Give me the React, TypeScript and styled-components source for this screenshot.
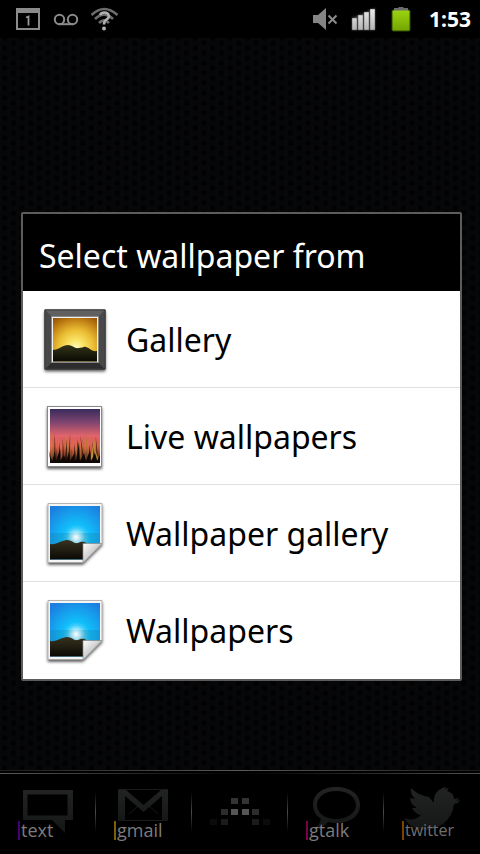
import React from "react";
import styled, { createGlobalStyle } from "styled-components";

const GlobalStyle = createGlobalStyle`
  * { box-sizing: border-box; }
  body { margin: 0; background: #000; font-family: "Noto Sans", "Open Sans", sans-serif; }
  button { font: inherit; border: 0; margin: 0; cursor: pointer; }
`;

const dotTile = encodeURIComponent(
  `<svg xmlns="http://www.w3.org/2000/svg" width="52" height="30"><rect width="52" height="30" fill="#060708"/><g fill="#020203" stroke="#08090a" stroke-width=".6">${[0, 1, 2, 3, 4, 5, 6]
    .map((c) =>
      [-1, 0, 1, 2, 3]
        .map((r) => `<circle cx="${c * 8.667 - 4}" cy="${r * 10 + (c % 2 ? 8 : 3)}" r="3.4"/>`)
        .join("")
    )
    .join("")}</g></svg>`
);

const Screen = styled.div`
  min-height: 100vh;
  display: flex;
  flex-direction: column;
  background: #040506 url("data:image/svg+xml,${dotTile}");
`;

const StatusBar = styled.header`
  display: flex;
  align-items: center;
  justify-content: space-between;
  height: 38px;
  padding: 0 9px 0 15px;
  background: #000;
`;

const StatusGroup = styled.div`
  display: flex;
  align-items: center;
  gap: 12px;
`;

const Clock = styled.time`
  color: #fff;
  font-size: 21px;
  font-weight: 700;
  line-height: 38px;
  margin-left: 4px;
`;

const Desktop = styled.main`
  flex: 1;
`;

const Overlay = styled.div`
  position: fixed;
  inset: 38px 0 0;
  display: flex;
  align-items: center;
  padding: 0 18px 0 21px;
  pointer-events: none;
`;

const Dialog = styled.section`
  flex: 1;
  border: 2px solid #5c5c5c;
  border-radius: 2px;
  background: #000;
  pointer-events: auto;
`;

const DialogTitle = styled.h1`
  margin: 0;
  padding: 20px 16px 13px;
  color: #fff;
  font-size: 32px;
  font-weight: 400;
  line-height: 44px;
  white-space: nowrap;
`;

const OptionList = styled.ul`
  margin: 0;
  padding: 0;
  list-style: none;
  background: #fff;
`;

const OptionItem = styled.li`
  border-bottom: 1px solid #e1e1e1;
  &:last-child { border-bottom-color: #fff; }
`;

const OptionButton = styled.button`
  display: flex;
  align-items: center;
  gap: 15px;
  width: 100%;
  height: 96px;
  padding: 0 16px;
  background: transparent;
  color: #000;
  font-size: 32px;
  line-height: 44px;
  text-align: left;
  white-space: nowrap;
`;

const OptionLabel = styled.span`
  padding-top: 2px;
`;

const Dock = styled.nav`
  display: grid;
  grid-template-columns: repeat(5, 1fr);
  height: 84px;
  padding-top: 4px;
  background:
    linear-gradient(90deg, #1c1c1c, #5a5a5a 50%, #1c1c1c) 0 0 / 100% 1px no-repeat,
    linear-gradient(90deg, #5a5a5a, #000 50%, #505050) 0 3px / 100% 1px no-repeat,
    #000;
`;

const DockButton = styled.button`
  display: grid;
  justify-items: start;
  padding: 0;
  background: linear-gradient(#000, #4a4a4a 50%, #000) 100% 18px / 1px 40px no-repeat;
  &:last-child { background: none; }
  & > * { grid-area: 1 / 1; }
`;

const DockLabel = styled.span<{ $accent: string; $bold?: boolean }>`
  align-self: end;
  margin: 0 0 14px 18px;
  padding-left: 1px;
  border-left: 2px solid ${(p) => p.$accent};
  color: ${(p) => (p.$bold ? "#7c7c7c" : "#707070")};
  font-family: "Open Sans", "Noto Sans", sans-serif;
  font-size: ${(p) => (p.$bold ? 18 : 16)}px;
  font-weight: ${(p) => (p.$bold ? 500 : 400)};
  line-height: 19px;
`;

const Icon = styled.svg`
  display: block;
  flex: none;
`;

const CalendarIcon = () => (
  <Icon width="26" height="24" viewBox="0 0 26 24" role="img" aria-label="Calendar event">
    <path d="M1 1h24v22H1zM3 6v15h20V6z" fill="#8b8b8b" fillRule="evenodd" />
    <path d="M11 10.500l2.500-1V18.500" fill="none" stroke="#999" strokeWidth="1.8" />
  </Icon>
);

const VoicemailIcon = () => (
  <Icon width="26" height="24" viewBox="0 0 26 24" role="img" aria-label="Voicemail">
    <g fill="none" stroke="#8b8b8b" strokeWidth="2">
      <circle cx="6.500" cy="12.500" r="4.700" />
      <circle cx="19.500" cy="12.500" r="4.700" />
      <path d="M6 17.200h14" />
    </g>
  </Icon>
);

const WifiIcon = () => (
  <Icon width="30" height="26" viewBox="0 0 30 26" role="img" aria-label="Wi-Fi unknown">
    <g fill="none" stroke="#6c6c6c" strokeWidth="2.600">
      <path d="M.500 9Q13-3 26.500 9" />
      <path d="M4 13Q13 4 22 13" />
      <path d="M8 17Q13 12 18 17" />
    </g>
    <path d="M9 9Q10 6.500 13.500 6.500T18 10Q18 12 15.500 13.500T13 18.500" fill="none" stroke="#b0b0b0" strokeWidth="2.600" />
    <circle cx="13" cy="22.500" r="2" fill="#b0b0b0" />
  </Icon>
);

const MuteIcon = () => (
  <Icon width="26" height="24" viewBox="0 0 26 24" role="img" aria-label="Muted">
    <path d="M0 8h5L13 1v22L5 16H0z" fill="#858585" />
    <path d="M15.500 8.500l8 8m0-8l-8 8" stroke="#8b8b8b" strokeWidth="2" />
  </Icon>
);

const SignalIcon = () => (
  <Icon width="26" height="26" viewBox="0 0 26 26" role="img" aria-label="Signal strength">
    <defs>
      <linearGradient id="bar" x2="0" y2="1">
        <stop stopColor="#ececec" />
        <stop offset="1" stopColor="#b4b4b4" />
      </linearGradient>
      <filter id="glow" x="-20%" y="-20%" width="140%" height="140%">
        <feGaussianBlur stdDeviation="1.300" />
      </filter>
    </defs>
    <path d="M1 12L24 2v22H1z" fill="#444" filter="url(#glow)" />
    <path d="M1 12h5v12H1zM7 9h5v15H7zM13 6h5v18h-5zM19 3h5v21h-5z" fill="url(#bar)" stroke="#444" strokeWidth=".4" />
  </Icon>
);

const BatteryIcon = () => (
  <Icon width="24" height="30" viewBox="0 0 24 30" role="img" aria-label="Battery full">
    <defs>
      <linearGradient id="charge" x2="0" y2="1">
        <stop stopColor="#9bd411" />
        <stop offset="1" stopColor="#74a600" />
      </linearGradient>
    </defs>
    <rect x="2.500" y="5.500" width="19" height="22" rx="2" fill="#2f4a00" />
    <path d="M5 7V4h4l1-1h4l1 1h4v3z" fill="#6b6b6b" />
    <rect x="3.500" y="6.500" width="17" height="20" rx="1" fill="url(#charge)" />
  </Icon>
);

const Shadow = ({ id }: { id: string }) => (
  <filter id={id} x="-20%" y="-20%" width="140%" height="150%">
    <feDropShadow dx="0" dy="2" stdDeviation="1.600" floodOpacity=".65" />
  </filter>
);

const FrameIcon = () => (
  <Icon width="72" height="72" viewBox="0 0 72 72" aria-hidden="true">
    <defs>
      <Shadow id="frameShadow" />
      <radialGradient id="sunset" cx=".52" cy=".68" r=".85">
        <stop stopColor="#fffbc0" />
        <stop offset=".2" stopColor="#fbe568" />
        <stop offset=".48" stopColor="#eabd33" />
        <stop offset=".78" stopColor="#bc7a12" />
        <stop offset="1" stopColor="#8b4c07" />
      </radialGradient>
      <linearGradient id="soil" x2="0" y2="1">
        <stop stopColor="#34331a" />
        <stop offset="1" stopColor="#090a03" />
      </linearGradient>
    </defs>
    <rect x="5.500" y="6.500" width="61" height="60" rx="1" fill="#4b4b4b" filter="url(#frameShadow)" />
    <path d="M5.500 6.500h61L60 13H12z" fill="#606060" />
    <path d="M5.500 66.500h61L60 60H12z" fill="#2d2d2d" />
    <path d="M5.500 66.500v-60L12 13v47zM66.500 66.500v-60L60 13v47z" fill="#484848" />
    <path d="M6 66V7h60v59z" fill="none" stroke="#3c3c3c" />
    <rect x="12.500" y="13.500" width="47" height="46" fill="#f2f2f2" stroke="#888" />
    <rect x="14" y="15" width="44" height="43.500" fill="url(#sunset)" />
    <path d="M14 47c5 0 10-5 15-5 4 0 7 4 11 3 3 0 5-2 7-1 4 1 6 5 11 4v10.500H14z" fill="url(#soil)" />
  </Icon>
);

const bladeColors = ["#8c3d34", "#d58a3e", "#2a120c", "#c0603c", "#5b2418", "#a8842a", "#d8803c"];

const blades = Array.from({ length: 44 }, (_, i) => {
  const x = 11.500 + ((i * 17) % 44) * 1.1;
  const height = 12 + ((i * 23) % 20);
  const lean = ((i * 7) % 5) - 2;
  return { d: `M${x} 62L${x + lean} ${62 - height}L${x + 2} 62z`, fill: bladeColors[i % 7] };
});

const GrassIcon = () => (
  <Icon width="72" height="72" viewBox="0 0 72 72" aria-hidden="true">
    <defs>
      <Shadow id="grassShadow" />
      <linearGradient id="dusk" x2="0" y2="1">
        <stop stopColor="#392b5c" />
        <stop offset=".25" stopColor="#80466f" />
        <stop offset=".5" stopColor="#e3646c" />
        <stop offset=".75" stopColor="#e8704f" />
        <stop offset="1" stopColor="#a05020" />
      </linearGradient>
      <linearGradient id="field" x2="0" y2="1">
        <stop stopColor="#3a1210" stopOpacity="0" />
        <stop offset="1" stopColor="#0a0502" stopOpacity=".7" />
      </linearGradient>
    </defs>
    <rect x="8.500" y="6.500" width="54" height="60" fill="#fff" stroke="#888" filter="url(#grassShadow)" />
    <rect x="11" y="9" width="50" height="54" fill="url(#dusk)" />
    <path d="M11 37h50v26H11z" fill="#c04444" opacity=".15" />
    {blades.map((b) => (
      <path key={b.d} d={b.d} fill={b.fill} />
    ))}
    <path d="M11 46h50v17H11z" fill="url(#field)" />
    <path d="M38 60l2-20 1 20zM51 60l4-19-1 19zM58 60l-4-15 6 15z" fill="#c0a43a" opacity=".8" />
    <path d="M11 63v-7l2 5 3-9 1 9 4-12v12l4-6 2 6 3-9 1 9 4-7 2 7 3-19 1 19 4-8 2 8 4-11 1 11 4-8 2 8 3-6v8z" fill="#100805" />
  </Icon>
);

const PictureIcon = ({ id }: { id: string }) => (
  <Icon width="72" height="72" viewBox="0 0 72 72" aria-hidden="true">
    <defs>
      <Shadow id={`${id}Shadow`} />
      <radialGradient id={`${id}Sky`} cx=".53" cy=".62" r=".72">
        <stop stopColor="#e4faff" />
        <stop offset=".14" stopColor="#7fe0fa" />
        <stop offset=".38" stopColor="#10bffa" />
        <stop offset="1" stopColor="#1c7fe0" />
      </radialGradient>
      <radialGradient id={`${id}Sun`}>
        <stop stopColor="#fff" stopOpacity=".95" />
        <stop offset="1" stopColor="#bff2ff" stopOpacity="0" />
      </radialGradient>
      <linearGradient id={`${id}Land`} x2="0" y2="1">
        <stop stopColor="#383320" />
        <stop offset="1" stopColor="#0a0904" />
      </linearGradient>
      <linearGradient id={`${id}Curl`} x2="1" y2="1">
        <stop stopColor="#fff" />
        <stop offset=".55" stopColor="#c6c6c6" />
      </linearGradient>
    </defs>
    <path d="M9 6.500h54v40L44 65.500H9z" fill="#f5f5f5" stroke="#999" strokeWidth=".7" filter={`url(#${id}Shadow)`} />
    <path d="M11 9h50v38L44 62.500H11z" fill={`url(#${id}Sky)`} />
    <path d="M11 36h50v11H11z" fill="#167eaa" opacity=".3" />
    <circle cx="37" cy="40" r="9" fill={`url(#${id}Sun)`} />
    <path d="M11 47c7 1 12-4 17-4 5 0 7 4 11 3 3-1 5-2 8 0v16.500H11z" fill={`url(#${id}Land)`} />
    <path d="M44 46.500h19L44 66z" fill={`url(#${id}Curl)`} stroke="#888" strokeWidth=".7" />
  </Icon>
);

const DockFill = ({ id }: { id: string }) => (
  <defs>
    <linearGradient id={id} x2="0" y2="1">
      <stop stopColor="#222323" />
      <stop offset="1" stopColor="#151616" />
    </linearGradient>
  </defs>
);

const TextArt = () => (
  <Icon width="90" height="78" viewBox="0 0 90 78" aria-hidden="true">
    <DockFill id="textFill" />
    <path d="M23 16h50v30h-8v13L52 46H23zM27.500 20.500v21h40v-21z" fill="url(#textFill)" fillRule="evenodd" />
  </Icon>
);

const MailArt = () => (
  <Icon width="90" height="78" viewBox="0 0 90 78" aria-hidden="true">
    <DockFill id="mailFill" />
    <path d="M22 15h50v32h-6V22L47.500 38 29 22v25h-7z" fill="url(#mailFill)" />
    <path d="M30 16h35L47.500 31z" fill="#000" />
    <path d="M22 15.500h50M29 46.500h37M33 40l9-8m11 0l9 8" fill="none" stroke="#1a1a1a" />
  </Icon>
);

const pixels: [number, number, string][] = [
  [39, 24, "#333"], [50, 24, "#333"],
  [29, 35, "#2c2c2c"], [39, 35, "#555"], [50, 35, "#555"], [60, 35, "#2c2c2c"],
  [18, 45, "#0b0b0b"], [29, 45, "#1b1b1b"], [60, 45, "#1b1b1b"], [71, 45, "#0b0b0b"],
];

const DrawerArt = () => (
  <Icon width="90" height="78" viewBox="0 0 90 78" aria-hidden="true">
    {pixels.map(([x, y, fill]) => (
      <rect key={`${x}-${y}`} x={x} y={y} width="7" height="6" fill={fill} />
    ))}
  </Icon>
);

const TalkArt = () => (
  <Icon width="90" height="78" viewBox="0 0 90 78" aria-hidden="true">
    <DockFill id="talkFill" />
    <path d="M48 13c14 0 24 7 24 18S62 49 49 49q-5 0-9-1-4 6-13 6 5-4 6-9-8-5-8-14c0-11 10-18 23-18m0 4c-11 0-19 6-19 14s8 14 19 14 20-6 20-14-8-14-20-14" fill="url(#talkFill)" fillRule="evenodd" />
  </Icon>
);

const BirdArt = () => (
  <Icon width="90" height="78" viewBox="0 0 90 78" aria-hidden="true">
    <DockFill id="birdFill" />
    <path d="M20 44q10 4 17-3-6-1-9-7h5q-7-4-7-10l5 1q-5-5-4-11 8 8 18 9l5 6q-1-9 5-13 4-3 7-3l-1 2 4-1-2 3q7 2 7 8l6-1-4 3 4-1-2 3-4 1q-1 12-11 20-14 10-28 4-7-3-11-10z" fill="url(#birdFill)" />
  </Icon>
);

const options = [
  { label: "Gallery", icon: <FrameIcon /> },
  { label: "Live wallpapers", icon: <GrassIcon /> },
  { label: "Wallpaper gallery", icon: <PictureIcon id="wallA" /> },
  { label: "Wallpapers", icon: <PictureIcon id="wallB" /> },
];

const shortcuts = [
  { label: "text", accent: "#460075", bold: true, art: <TextArt /> },
  { label: "gmail", accent: "#806000", bold: true, art: <MailArt /> },
  { label: "", accent: "", art: <DrawerArt /> },
  { label: "gtalk", accent: "#7b0045", bold: true, art: <TalkArt /> },
  { label: "twitter", accent: "#7d4100", art: <BirdArt /> },
];

export default function App() {
  return (
    <Screen>
      <GlobalStyle />
      <StatusBar>
        <StatusGroup>
          <CalendarIcon />
          <VoicemailIcon />
          <WifiIcon />
        </StatusGroup>
        <StatusGroup>
          <MuteIcon />
          <SignalIcon />
          <BatteryIcon />
          <Clock>1:53</Clock>
        </StatusGroup>
      </StatusBar>
      <Desktop />
      <Dock aria-label="Shortcuts">
        {shortcuts.map((s) => (
          <DockButton key={s.label || "apps"} type="button" aria-label={s.label || "All apps"}>
            {s.art}
            {s.label && (
              <DockLabel $accent={s.accent} $bold={s.bold}>
                {s.label}
              </DockLabel>
            )}
          </DockButton>
        ))}
      </Dock>
      <Overlay>
        <Dialog role="dialog" aria-labelledby="dialog-title">
          <DialogTitle id="dialog-title">Select wallpaper from</DialogTitle>
          <OptionList>
            {options.map((o) => (
              <OptionItem key={o.label}>
                <OptionButton type="button">
                  {o.icon}
                  <OptionLabel>{o.label}</OptionLabel>
                </OptionButton>
              </OptionItem>
            ))}
          </OptionList>
        </Dialog>
      </Overlay>
    </Screen>
  );
}
